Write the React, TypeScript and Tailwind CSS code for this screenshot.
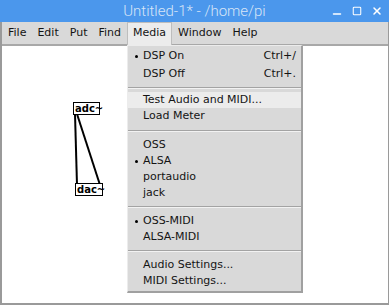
import { Minus, Square, X } from 'lucide-react';

const FONT = { fontFamily: '"DejaVu Sans", sans-serif' };

type Item = { label: string; shortcut?: string; checked?: boolean; active?: boolean; h?: string };

const GROUPS: Item[][] = [
  [
    { label: 'DSP On', shortcut: 'Ctrl+/', checked: true, h: 'h-[18px]' },
    { label: 'DSP Off', shortcut: 'Ctrl+.', h: 'h-[18px]' },
  ],
  [{ label: 'Test Audio and MIDI...', active: true }, { label: 'Load Meter' }],
  [{ label: 'OSS' }, { label: 'ALSA', checked: true }, { label: 'portaudio' }, { label: 'jack' }],
  [{ label: 'OSS-MIDI', checked: true }, { label: 'ALSA-MIDI' }],
  [{ label: 'Audio Settings...' }, { label: 'MIDI Settings...' }],
];

const SEP_HEIGHTS = ['', 'h-[9px]', 'h-[13px]', 'h-[12px]', 'h-[12px]'];

const MENUS = ['File', 'Edit', 'Put', 'Find', 'Media', 'Window', 'Help'];

function MenuRow({ item }: { item: Item }) {
  return (
    <div
      className={`flex items-center pl-[7px] pr-[5px] text-[11px] text-[#141414] ${item.h ?? 'h-[16px]'} ${
        item.active ? 'bg-[#ececec]' : ''
      }`}
    >
      <div className="flex w-[8px] items-center">
        {item.checked ? <div className="h-[3px] w-[3px] rounded-full bg-black" /> : null}
      </div>
      <span className="flex-1">{item.label}</span>
      {item.shortcut ? <span>{item.shortcut}</span> : null}
    </div>
  );
}

function Separator({ h }: { h: string }) {
  return (
    <div className={`flex items-center ${h}`}>
      <div className="w-full border-t border-b border-t-[#a3a3a3] border-b-[#f2f2f2]" />
    </div>
  );
}

export default function App() {
  return (
    <div className="relative h-[305px] w-[389px] overflow-hidden bg-white" style={FONT}>
      {/* title bar */}
      <div className="relative flex h-[22px] items-center justify-center bg-[#4b97ec]">
        <span className="text-[15px] font-light text-[#d7e5f7]" style={{ fontFamily: 'Roboto, sans-serif' }}>
          Untitled-1* - /home/pi
        </span>
        <div className="absolute right-[6px] top-0 flex h-[22px] items-center gap-[9px] text-white">
          <Minus size={12} strokeWidth={3} className="translate-y-[3px]" />
          <Square size={10} strokeWidth={2.5} />
          <X size={12} strokeWidth={3} />
        </div>
      </div>

      {/* window body */}
      <div className="flex h-[283px] flex-col border-b-2 border-l-2 border-r border-[#9a9a9a]">
        <div className="flex h-[24px] items-center gap-[1px] border-b-2 border-[#a8a8a8] bg-[#d9d9d9] pl-[1px] text-[11px] text-[#141414]">
          {MENUS.map((m) => (
            <div
              key={m}
              className={`flex h-[23px] items-center px-[5px] ${
                m === 'Media' ? 'border border-b-0 border-[#bdbdbd] bg-[#ececec]' : ''
              }`}
            >
              {m}
            </div>
          ))}
        </div>

        {/* canvas */}
        <div className="relative flex-1 bg-white">
          <svg className="absolute left-0 top-0" width="200" height="200">
            <line x1="73" y1="68" x2="75" y2="139" stroke="black" strokeWidth="2" />
            <line x1="75" y1="68" x2="98" y2="139" stroke="black" strokeWidth="2" />
          </svg>
          <div className="absolute left-[71px] top-[56px] flex h-[13px] w-[27px] items-center border border-black bg-white pl-[1px] text-[10px] font-bold leading-none">
            adc~
          </div>
          <div className="absolute left-[73px] top-[137px] flex h-[13px] w-[28px] items-center border border-black bg-white pl-[1px] text-[10px] font-bold leading-none">
            dac~
          </div>
        </div>
      </div>

      {/* open Media menu */}
      <div className="absolute left-[127px] top-[45px] w-[176px] border-b-2 border-r-2 border-l border-t border-b-[#a0a0a0] border-r-[#a0a0a0] border-l-[#ececec] border-t-[#ececec] bg-[#d9d9d9] pb-[2px] pt-[1px]">
        {GROUPS.map((group, gi) => (
          <div key={gi}>
            {gi > 0 ? <Separator h={SEP_HEIGHTS[gi]} /> : null}
            {group.map((item) => (
              <MenuRow key={item.label} item={item} />
            ))}
          </div>
        ))}
      </div>
    </div>
  );
}
